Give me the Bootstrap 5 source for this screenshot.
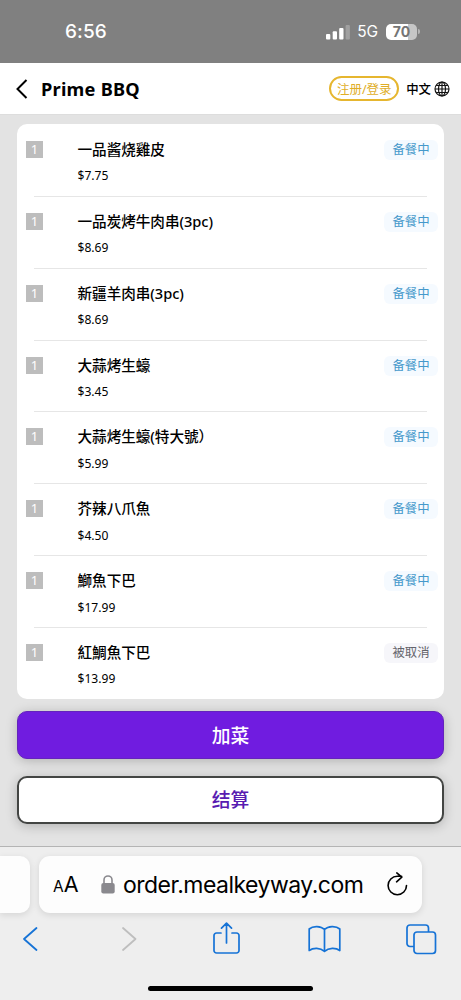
<!DOCTYPE html>
<html lang="zh">
<head>
<meta charset="utf-8">
<meta name="viewport" content="width=device-width, initial-scale=1">
<title>Prime BBQ</title>
<link href="https://cdn.jsdelivr.net/npm/bootstrap@5.3.0/dist/css/bootstrap.min.css" rel="stylesheet">
<style>
body{font-family:"Noto Sans","Noto Sans CJK SC",sans-serif;background:#e3e3e3;color:#000;height:1000px;overflow:hidden}
svg{display:block;flex:none}
.ios{font-family:Inter,"Liberation Sans",sans-serif}
.statusbar{height:63px;background:#808080;color:#fff;padding:0 41px 0 65px}
.clock{font-size:19px;font-weight:500;letter-spacing:.1px;line-height:24px}
.net{font-size:15.5px;line-height:20px;margin:1px 0 0 7px;letter-spacing:-.1px}
.power{width:31px;height:16px;border-radius:5px;background:linear-gradient(90deg,#fff 70%,#c6c6c6 70%);color:#757575;font-size:14px;line-height:16px;font-weight:700;margin-left:8px}
.nub{width:2px;height:5px;border-radius:0 2px 2px 0;background:#b5b5b5;margin-left:1px}
.topnav{height:52px;background:#fff;padding:0 11px 0 16px;border-bottom:1px solid #ddd}
.shop{font-size:18.2px;font-weight:700;line-height:26px;margin-left:13px;letter-spacing:.25px}
.login{width:70px;height:25px;border:2px solid #e6b62f;border-radius:13px;color:#e0ae27;font-size:12.5px;line-height:23px}
.lang{font-size:12.4px;font-weight:500;line-height:20px;margin:2px 3px 0 7px}
.orders{margin:9px 17px 0;height:574.5px;background:#fff;border-radius:10px}
.dish{height:71.87px;padding:16px 5px 0 9px}
.rule{position:absolute;left:17px;right:17px;bottom:-1px;height:1px;background:#e6e6e6}
.qty{width:17px;height:17px;background:#bdbdbd;color:#fff;font-size:13px;line-height:17px;margin:1px 34.5px 0 0}
.dname{font-size:14.6px;font-weight:500;line-height:20px;margin-top:-1px;letter-spacing:-.03px}
.price{font-size:12.1px;line-height:18px;margin-top:8.4px}
.state{width:54px;height:20px;border-radius:6px;background:#f5faff;color:#4599cb;font-size:12.4px;line-height:20.5px;margin-right:1px}
.state.off{background:#f6f6fa;color:#64646b}
.act{height:48px;margin:0 17px;border-radius:10px;font-size:18.8px;font-weight:500;line-height:28px;padding:2px 0 0;box-shadow:0 2px 12px rgba(0,0,0,.22)}
.act-add{margin-top:12.5px;background:#701ce0;color:#fff;border:1px solid #6423bd}
.act-pay{margin-top:17px;padding:0;background:#fff;color:#581bb1;border:2px solid #434543}
.browser{margin-top:22px;height:154px;background:#eee;border-top:1px solid #b4b4b4;padding-top:9px}
.omni{height:57px;background:#fdfdfd;box-shadow:0 2px 7px rgba(0,0,0,.11)}
.tab-prev{width:30px;border-radius:0 10px 10px 0}
.tab-now{width:383px;margin-left:9px;border-radius:11px;padding:0 14px}
.aa{line-height:30px;width:48px;margin-top:2px}
.aa small{font-size:15.5px}.aa span{font-size:21.5px}
.url{font-size:23px;line-height:30px;letter-spacing:-.52px;margin:1px 0 0 8px}
.tools{height:51px;padding:1px 24px 0 22px}
.home{width:165px;height:5px;border-radius:3px;background:#000;margin:22px auto 0 148px}
.fwd{margin-left:18px}
.share{margin-left:11px}
.book{margin-left:3px}
</style>
</head>
<body>
<div class="statusbar ios d-flex align-items-center">
  <span class="clock">6:56</span>
  <svg class="ms-auto" width="24" height="16" viewBox="0 0 24 16"><g fill="#fff"><rect y="10" width="4.3" height="5.500" rx="1"/><rect x="6.7" y="7.2" width="4.3" height="8.3" rx="1"/><rect x="13.2" y="4" width="4.3" height="11.500" rx="1"/><rect x="19.6" y="1" width="4.3" height="14.500" rx="1" opacity=".25"/></g></svg>
  <span class="net">5G</span>
  <span class="power text-center">70</span><i class="nub"></i>
</div>
<header class="topnav d-flex align-items-center">
  <svg width="12" height="20" viewBox="0 0 12 20"><path d="M10.5 1 1.5 10l9 9" fill="none" stroke="#000" stroke-width="2"/></svg>
  <span class="shop">Prime BBQ</span>
  <span class="login text-center ms-auto">注册/登录</span>
  <span class="lang">中文</span>
  <svg width="16" height="16" viewBox="0 0 16 16" fill="none" stroke="#111" stroke-width="1.15"><circle cx="8" cy="8" r="7"/><ellipse cx="8" cy="8" rx="3.5" ry="7"/><path d="M8 1v14M1 8h14M2.1 4.5h11.8M2.1 11.5h11.8"/></svg>
</header>
<main>
  <div class="orders">
    <div class="dish d-flex align-items-start position-relative"><span class="qty text-center">1</span><div><div class="dname">一品酱烧雞皮</div><div class="price">$7.75</div></div><span class="state text-center ms-auto">备餐中</span><i class="rule"></i></div>
    <div class="dish d-flex align-items-start position-relative"><span class="qty text-center">1</span><div><div class="dname">一品炭烤牛肉串(3pc)</div><div class="price">$8.69</div></div><span class="state text-center ms-auto">备餐中</span><i class="rule"></i></div>
    <div class="dish d-flex align-items-start position-relative"><span class="qty text-center">1</span><div><div class="dname">新疆羊肉串(3pc)</div><div class="price">$8.69</div></div><span class="state text-center ms-auto">备餐中</span><i class="rule"></i></div>
    <div class="dish d-flex align-items-start position-relative"><span class="qty text-center">1</span><div><div class="dname">大蒜烤生蠔</div><div class="price">$3.45</div></div><span class="state text-center ms-auto">备餐中</span><i class="rule"></i></div>
    <div class="dish d-flex align-items-start position-relative"><span class="qty text-center">1</span><div><div class="dname">大蒜烤生蠔(特大號）</div><div class="price">$5.99</div></div><span class="state text-center ms-auto">备餐中</span><i class="rule"></i></div>
    <div class="dish d-flex align-items-start position-relative"><span class="qty text-center">1</span><div><div class="dname">芥辣八爪魚</div><div class="price">$4.50</div></div><span class="state text-center ms-auto">备餐中</span><i class="rule"></i></div>
    <div class="dish d-flex align-items-start position-relative"><span class="qty text-center">1</span><div><div class="dname">鰤魚下巴</div><div class="price">$17.99</div></div><span class="state text-center ms-auto">备餐中</span><i class="rule"></i></div>
    <div class="dish d-flex align-items-start position-relative"><span class="qty text-center">1</span><div><div class="dname">紅鯛魚下巴</div><div class="price">$13.99</div></div><span class="state off text-center ms-auto">被取消</span></div>
  </div>
  <div class="d-flex flex-column">
    <button class="act act-add" type="button">加菜</button>
    <button class="act act-pay" type="button">结算</button>
  </div>
</main>
<footer class="browser ios">
  <div class="d-flex">
    <div class="omni tab-prev"></div>
    <div class="omni tab-now d-flex align-items-center">
      <span class="aa"><small>A</small><span>A</span></span>
      <svg width="14" height="19" viewBox="0 0 14 19"><path d="M3 9V5a4 4 0 0 1 8 0v4" fill="none" stroke="#8a898e" stroke-width="1.6"/><rect x=".3" y="8" width="13.4" height="10.5" rx="2" fill="#8a898e"/></svg>
      <span class="url">order.mealkeyway.com</span>
      <svg class="ms-auto" width="21" height="25" viewBox="0 0 21 25" fill="none" stroke="#000" stroke-width="1.6" stroke-linecap="round" stroke-linejoin="round"><path d="M19.5 13.5A9.2 9.2 0 1 1 10.300 4.300h4.300M9.800 .9l5 4.300-5.200 4.600"/></svg>
    </div>
  </div>
  <nav class="tools d-flex justify-content-between align-items-center">
    <svg width="16" height="26" viewBox="0 0 16 26"><path d="M14.5 2 2 13l12.500 11" fill="none" stroke="#1673d6" stroke-width="1.8" stroke-linecap="round" stroke-linejoin="round"/></svg>
    <svg class="fwd" width="16" height="26" viewBox="0 0 16 26"><path d="m2 2 12.500 11L2 24" fill="none" stroke="#bebebe" stroke-width="1.8" stroke-linecap="round" stroke-linejoin="round"/></svg>
    <svg class="share" width="27" height="34" viewBox="0 0 27 34" fill="none" stroke="#1673d6" stroke-width="1.7" stroke-linecap="round" stroke-linejoin="round"><path d="M8 11H3.500A2.500 2.500 0 0 0 1 13.500v15A2.500 2.500 0 0 0 3.500 31h20a2.500 2.500 0 0 0 2.500-2.500v-15A2.500 2.500 0 0 0 23.500 11H19M13.500 21V1.500M8.500 6.200l5-5 5 5"/></svg>
    <svg class="book" width="33" height="28" viewBox="0 0 33 28" fill="none" stroke="#1673d6" stroke-width="1.7" stroke-linejoin="round"><path d="M16.500 4.500C13 .8 5 .5 1.200 4v21.500c4-3 11-3 15.300.8 4.300-3.800 11.300-3.800 15.300-.8V4C28 .5 20 .8 16.500 4.500v21.800"/></svg>
    <svg width="31" height="31" viewBox="0 0 31 31" fill="none" stroke="#1673d6" stroke-width="1.7"><path d="M8 22.500H4A3 3 0 0 1 1 19.500V4a3 3 0 0 1 3-3h15.500a3 3 0 0 1 3 3v4"/><rect x="8" y="8" width="21.500" height="21.500" rx="3"/></svg>
  </nav>
  <div class="home"></div>
</footer>
<script src="https://cdn.jsdelivr.net/npm/bootstrap@5.3.0/dist/js/bootstrap.bundle.min.js"></script>
</body>
</html>
